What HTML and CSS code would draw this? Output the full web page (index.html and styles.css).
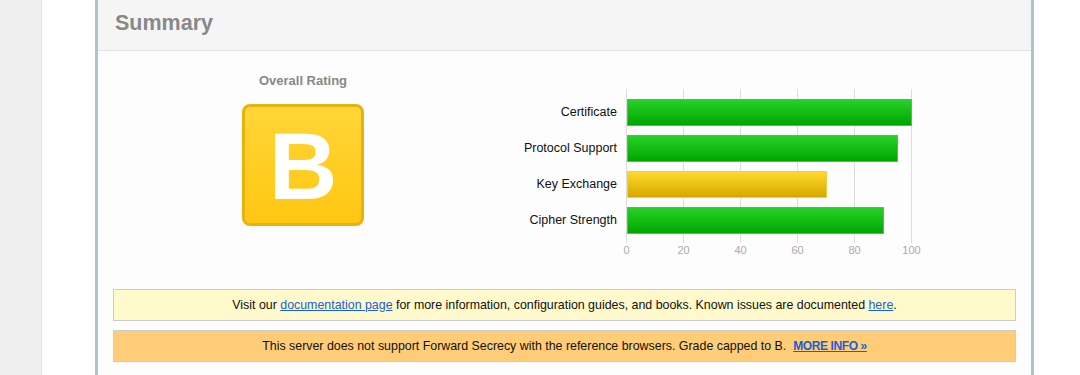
FILE: index.html
```html
<!DOCTYPE html>
<html>
<head>
<meta charset="utf-8">
<link rel="stylesheet" href="styles.css">
</head>
<body>
<div class="page">
    <div class="side"></div>
    <div class="gutter"></div>
    <div class="reportSection">
        <div class="reportTitle">Summary</div>
        <div class="reportBody">
            <div class="overview">
                <div class="rating">
                    <div class="ratingTitle">Overall Rating</div>
                    <div class="grade">B</div>
                </div>
                <div class="chart">
                    <div class="chartLabels">
                        <div>Certificate</div>
                        <div>Protocol Support</div>
                        <div>Key Exchange</div>
                        <div>Cipher Strength</div>
                    </div>
                    <div class="chartPlot">
                        <div class="plotArea">
                            <div class="bar" style="width: 285px"></div>
                            <div class="bar" style="width: 270.75px"></div>
                            <div class="bar bar-warn" style="width: 199.5px"></div>
                            <div class="bar" style="width: 256.5px"></div>
                        </div>
                        <div class="axis">
                            <span>0</span><span>20</span><span>40</span><span>60</span><span>80</span><span>100</span>
                        </div>
                    </div>
                </div>
            </div>
            <div class="notice notice-info">
                Visit our <a href="#">documentation page</a> for more information, configuration guides, and books. Known issues are documented <a href="#">here</a>.
            </div>
            <div class="notice notice-warn">
                This server does not support Forward Secrecy with the reference browsers. Grade capped to B.&nbsp; <a href="#">MORE INFO &raquo;</a>
            </div>
        </div>
    </div>
</div>
</body>
</html>
```
FILE: styles.css
```css
body {margin: 0; background: #fff; font: 12px/1.3 "Liberation Sans", Arial, sans-serif; color: #111;}
.page {display: flex; height: 375px; overflow: hidden;}
.side {width: 41px; flex: none; background: #efefef; border-right: 1px solid #d6e2e4;}
.gutter {width: 53px; flex: none;}
.reportSection {width: 933px; flex: none; border-left: 3px solid #a9c6ca; border-right: 3px solid #a9c6ca; background: #fdfdfd;}
.reportTitle {height: 51px; box-sizing: border-box; padding: 0 17px; background: #f5f5f5; border-bottom: 1px solid #dde5e7; color: #888; font-size: 21.5px; font-weight: bold; line-height: 46px;}
.reportBody {padding: 22px 15px 20px;}

.overview {display: flex; align-items: flex-start;}
.rating {width: 180px; margin-left: 100px; text-align: center;}
.ratingTitle {color: #888; font-size: 13px; font-weight: bold; line-height: 16px;}
.grade {width: 122px; height: 122px; box-sizing: border-box; margin: 15px auto 0; border: 3px solid #e8b20e; border-radius: 8px; background: linear-gradient(#ffd537, #ffc712); color: #fff; font-size: 95px; font-weight: bold; line-height: 118px;}

.chart {display: flex; margin: 16px 0 0 74px;}
.chartLabels {width: 150px; padding-top: 10px; display: flex; flex-direction: column; gap: 9px; text-align: right; font-size: 12.5px;}
.chartLabels div {height: 27px; line-height: 27px;}
.chartPlot {margin-left: 9px;}
.plotArea {width: 286px; padding: 10px 0 9px; display: flex; flex-direction: column; gap: 9px; background: linear-gradient(to right, #dcdcdc 1px, transparent 1px) 0 0 / 57px 100% repeat-x;}
.bar {height: 27px; margin-left: 1px; box-sizing: border-box; border: 1px solid #3ccf3c; background: linear-gradient(#27d127, #00a600);}
.bar.bar-warn {border-color: #f2cf3a; background: linear-gradient(#ffd92c, #d7a700);}
.axis {display: flex; margin-left: -28px; color: #aaa; font-size: 11px; line-height: 14px;}
.axis span {width: 57px; text-align: center;}

.notice {margin-top: 32px; padding: 8px 0; border: 1px solid #ccc; text-align: center; font-size: 12.4px; line-height: 14px;}
.notice + .notice {margin-top: 9px;}
.notice-info {background: #fff9cc;}
.notice-warn {background: #ffcd78;}
.notice a {color: #1a5fd6;}
.notice-warn a {font-size: 12px; font-weight: bold; letter-spacing: -0.4px;}
```
